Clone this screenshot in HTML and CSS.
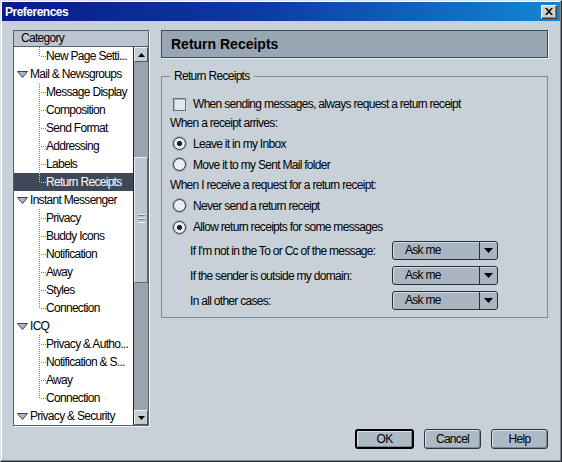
FILE: index.html
```html
<!DOCTYPE html>
<html>
<head>
<meta charset="utf-8">
<title>Preferences</title>
<link rel="stylesheet" href="styles.css">
</head>
<body>
<div class="window">
  <div class="titlebar">
    <span class="title">Preferences</span>
    <span class="close"><svg width="8" height="7" viewBox="0 0 8 7"><path d="M0 0h2l2 2.5L6 0h2L5 3.5 8 7H6L4 4.5 2 7H0l3-3.5z" fill="#000"/></svg></span>
  </div>
  <div class="content">
    <div class="main">
      <div class="tree-panel">
        <div class="tree-header">Category</div>
        <div class="tree-body">
          <ul class="tree">
            <li class="node child last">New Page Setti...</li>
            <li class="node parent"><svg class="twisty" width="11" height="7" viewBox="0 0 11 7"><polygon points="0.5,0.5 10.5,0.5 5.5,6.5" fill="#aab6c2" stroke="#3a4450"/></svg>Mail &amp; Newsgroups</li>
            <li class="node child">Message Display</li>
            <li class="node child">Composition</li>
            <li class="node child">Send Format</li>
            <li class="node child">Addressing</li>
            <li class="node child">Labels</li>
            <li class="node child last selected">Return Receipts</li>
            <li class="node parent"><svg class="twisty" width="11" height="7" viewBox="0 0 11 7"><polygon points="0.5,0.5 10.5,0.5 5.5,6.5" fill="#aab6c2" stroke="#3a4450"/></svg>Instant Messenger</li>
            <li class="node child">Privacy</li>
            <li class="node child">Buddy Icons</li>
            <li class="node child">Notification</li>
            <li class="node child">Away</li>
            <li class="node child">Styles</li>
            <li class="node child last">Connection</li>
            <li class="node parent"><svg class="twisty" width="11" height="7" viewBox="0 0 11 7"><polygon points="0.5,0.5 10.5,0.5 5.5,6.5" fill="#aab6c2" stroke="#3a4450"/></svg>ICQ</li>
            <li class="node child">Privacy &amp; Autho...</li>
            <li class="node child">Notification &amp; S...</li>
            <li class="node child">Away</li>
            <li class="node child last">Connection</li>
            <li class="node parent"><svg class="twisty" width="11" height="7" viewBox="0 0 11 7"><polygon points="0.5,0.5 10.5,0.5 5.5,6.5" fill="#aab6c2" stroke="#3a4450"/></svg>Privacy &amp; Security</li>
          </ul>
          <div class="scrollbar">
            <div class="sb-btn"><svg width="7" height="4" viewBox="0 0 7 4"><polygon points="3.5,0 7,4 0,4" fill="#000"/></svg></div>
            <div class="sb-track">
              <div class="sb-thumb"><span class="grip"></span></div>
            </div>
            <div class="sb-btn"><svg width="7" height="4" viewBox="0 0 7 4"><polygon points="0,0 7,0 3.5,4" fill="#000"/></svg></div>
          </div>
        </div>
      </div>
      <div class="pane">
        <div class="pane-header">Return Receipts</div>
        <fieldset class="group">
          <legend>Return Receipts</legend>
          <div class="row check-row"><span class="checkbox"></span>When sending messages, always request a return receipt</div>
          <div class="row label-row">When a receipt arrives:</div>
          <div class="row radio-row"><span class="radio on"></span>Leave it in my Inbox</div>
          <div class="row radio-row"><span class="radio"></span>Move it to my Sent Mail folder</div>
          <div class="row label-row">When I receive a request for a return receipt:</div>
          <div class="row radio-row"><span class="radio"></span>Never send a return receipt</div>
          <div class="row radio-row tall"><span class="radio on"></span>Allow return receipts for some messages</div>
          <div class="row select-row">
            <span class="select-label">If I'm not in the To or Cc of the message:</span>
            <span class="select"><span class="select-value">Ask me</span><span class="select-arrow"><svg width="9" height="5" viewBox="0 0 9 5"><polygon points="0,0 9,0 4.5,5" fill="#000"/></svg></span></span>
          </div>
          <div class="row select-row">
            <span class="select-label">If the sender is outside my domain:</span>
            <span class="select"><span class="select-value">Ask me</span><span class="select-arrow"><svg width="9" height="5" viewBox="0 0 9 5"><polygon points="0,0 9,0 4.5,5" fill="#000"/></svg></span></span>
          </div>
          <div class="row select-row">
            <span class="select-label">In all other cases:</span>
            <span class="select"><span class="select-value">Ask me</span><span class="select-arrow"><svg width="9" height="5" viewBox="0 0 9 5"><polygon points="0,0 9,0 4.5,5" fill="#000"/></svg></span></span>
          </div>
        </fieldset>
      </div>
    </div>
    <div class="buttons">
      <span class="btn default">OK</span>
      <span class="btn">Cancel</span>
      <span class="btn">Help</span>
    </div>
  </div>
</div>
</body>
</html>
```

FILE: styles.css
```css
* { box-sizing: border-box; }

body {
  margin: 0;
  font-family: "Liberation Sans", Arial, sans-serif;
  font-size: 12px;
  letter-spacing: -0.7px;
  color: #000;
}

.window {
  width: 562px;
  height: 462px;
  background: #c8d0d8;
  border: 1px solid;
  border-color: #dde2e7 #2a2f36 #2a2f36 #dde2e7;
  padding: 1px;
  box-shadow: inset -1px -1px 0 #7d8791, inset 1px 1px 0 #ffffff;
  display: flex;
  flex-direction: column;
}

.titlebar {
  height: 19px;
  flex: none;
  background: linear-gradient(to right, #0a1a86 0%, #0a3aa2 45%, #1486d2 100%);
  display: flex;
  align-items: center;
  justify-content: space-between;
  padding: 0 3px 0 3px;
}

.title {
  color: #fff;
  font-weight: bold;
  font-size: 12px;
  letter-spacing: -0.5px;
}

.close {
  width: 16px;
  height: 14px;
  background: #d4d0c8;
  border: 1px solid;
  border-color: #ffffff #404040 #404040 #ffffff;
  box-shadow: inset -1px -1px 0 #808080;
  display: flex;
  align-items: center;
  justify-content: center;
}

.content {
  flex: 1;
  padding: 9px 12px 10px 11px;
  display: flex;
  flex-direction: column;
}

.main {
  display: flex;
  gap: 12px;
  height: 396px;
}

/* Tree */
.tree-panel {
  width: 136px;
  flex: none;
  border: 1px solid #56606c;
  box-shadow: 1px 1px 0 #f2f4f6;
  display: flex;
  flex-direction: column;
}

.tree-header {
  height: 16px;
  background: #bcc5cf;
  border-bottom: 1px solid #56606c;
  padding-left: 7px;
  line-height: 15px;
}

.tree-body {
  flex: 1;
  display: flex;
  background: #fff;
  min-height: 0;
}

.tree {
  flex: 1;
  list-style: none;
  margin: 0;
  padding: 0;
  min-width: 0;
}

.node {
  height: 18px;
  line-height: 18px;
  white-space: nowrap;
  overflow: hidden;
}

.parent {
  display: flex;
  align-items: center;
  padding-left: 3px;
}

.twisty {
  margin-right: 2px;
  flex: none;
}

.child {
  padding-left: 32px;
  background:
    repeating-linear-gradient(to bottom, #808080 0 1px, transparent 1px 2px) 25px 0 / 1px 100% no-repeat,
    repeating-linear-gradient(to right, #808080 0 1px, transparent 1px 2px) 27px 9px / 5px 1px no-repeat;
}

.child.last {
  background:
    repeating-linear-gradient(to bottom, #808080 0 1px, transparent 1px 2px) 25px 0 / 1px 10px no-repeat,
    repeating-linear-gradient(to right, #808080 0 1px, transparent 1px 2px) 27px 9px / 5px 1px no-repeat;
}

.child.last.selected {
  color: #fff;
  background:
    repeating-linear-gradient(to bottom, #c8d0d8 0 1px, transparent 1px 2px) 25px 0 / 1px 10px no-repeat,
    repeating-linear-gradient(to right, #c8d0d8 0 1px, transparent 1px 2px) 27px 9px / 5px 1px no-repeat,
    #3d4959;
}

/* Scrollbar */
.scrollbar {
  width: 15px;
  flex: none;
  display: flex;
  flex-direction: column;
  border-left: 1px solid #1f252c;
  background: #9aa4af;
}

.sb-btn {
  height: 15px;
  flex: none;
  background: #c4ccd5;
  border: 1px solid;
  border-color: #eef1f4 #4a545f #4a545f #eef1f4;
  display: flex;
  align-items: center;
  justify-content: center;
}

.sb-track {
  flex: 1;
}

.sb-thumb {
  margin-top: 95px;
  height: 126px;
  background: #bcc6d0;
  border: 1px solid;
  border-color: #e6ebf0 #5d6873 #5d6873 #e6ebf0;
  display: flex;
  align-items: center;
  justify-content: center;
}

.grip {
  width: 7px;
  height: 9px;
  margin-top: -4px;
  background: repeating-linear-gradient(to bottom, #eef2f5 0 1px, #6f7a86 1px 2px, transparent 2px 4px);
}

/* Right pane */
.pane {
  flex: 1;
  display: flex;
  flex-direction: column;
  min-width: 0;
}

.pane-header {
  height: 28px;
  flex: none;
  border: 1px solid #3e4856;
  box-shadow: 1px 1px 0 #eef1f4;
  background-color: #98a5b3;
  background-image: repeating-conic-gradient(#93a1af 0 25%, #9eabb9 0 50%);
  background-size: 2px 2px;
  font-weight: bold;
  font-size: 14px;
  letter-spacing: 0;
  padding-left: 9px;
  line-height: 26px;
}

.group {
  margin: 11px 0 0 0;
  padding: 12px 8px 4px 8px;
  border: 1px solid #7f8a96;
  min-width: 0;
}

.group legend {
  padding: 0 4px;
  margin: 0;
  line-height: 14px;
}

.row {
  display: flex;
  align-items: center;
  white-space: nowrap;
}

.check-row {
  height: 18px;
  padding-left: 3px;
  gap: 7px;
}

.label-row {
  height: 20px;
}

.radio-row {
  height: 21px;
  padding-left: 3px;
  gap: 7px;
}

.radio-row.tall {
  height: 22px;
}

.checkbox {
  width: 13px;
  height: 13px;
  flex: none;
  border: 1px solid #66717d;
  background: #e4e9ee;
  box-shadow: inset 1px 1px 0 #a9b3bd;
}

.radio {
  width: 13px;
  height: 13px;
  flex: none;
  border-radius: 50%;
  border: 1px solid #2c3440;
  background: #eaeef2;
  box-shadow: 0 0 0 1px #a3adb8;
}

.radio.on {
  background: radial-gradient(circle, #1c2430 0 2.3px, #eaeef2 2.8px);
}

.select-row {
  height: 25px;
  padding-left: 20px;
}

.select-label {
  width: 202px;
  flex: none;
}

.select {
  width: 106px;
  height: 19px;
  display: flex;
  border: 1px solid #26303a;
  border-radius: 3px;
  background: #a9b5c1;
  box-shadow: inset 1px 1px 0 #d2dae2;
}

.select-value {
  flex: 1;
  padding-left: 12px;
  line-height: 17px;
}

.select-arrow {
  width: 18px;
  flex: none;
  border-left: 1px solid #26303a;
  display: flex;
  align-items: center;
  justify-content: center;
}

/* Buttons */
.buttons {
  margin-top: 3px;
  display: flex;
  justify-content: flex-end;
  gap: 10px;
}

.btn {
  width: 57px;
  height: 20px;
  display: flex;
  align-items: center;
  justify-content: center;
  border: 1px solid #2a3440;
  border-radius: 3px;
  background: #adb9c5;
  box-shadow: inset 1px 1px 0 #dbe2e9, inset -1px -1px 0 #7b8793;
}

.btn.default {
  width: 59px;
  border: 2px solid #000;
}
```
